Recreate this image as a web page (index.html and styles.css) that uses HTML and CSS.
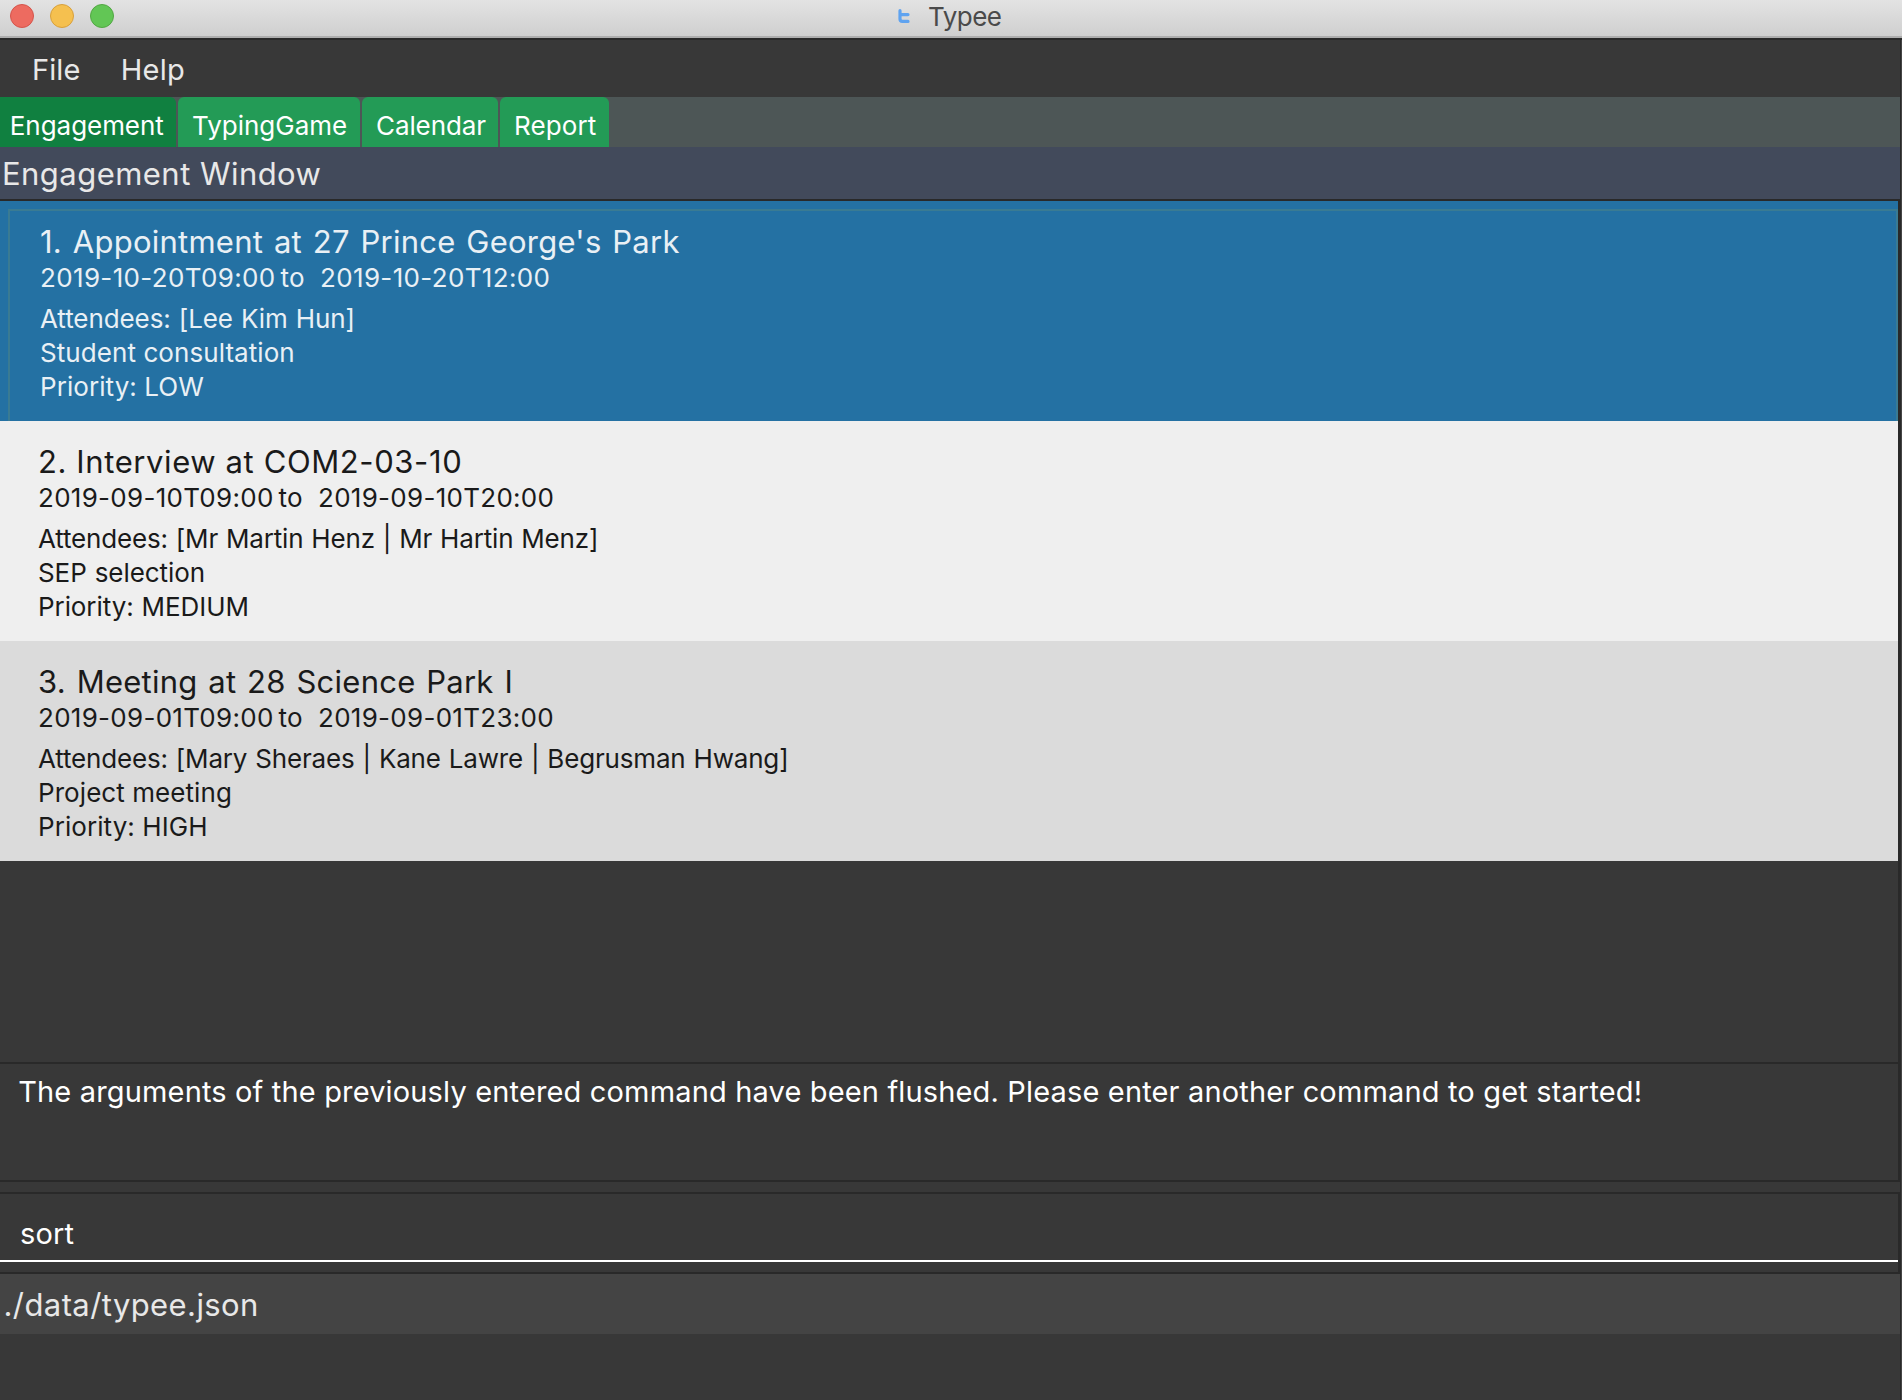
FILE: index.html
```html
<!DOCTYPE html>
<html lang="en">
<head>
<meta charset="utf-8">
<title>Typee</title>
<link rel="stylesheet" href="styles.css">
</head>
<body>
<div class="window">
  <header class="titlebar">
    <div class="lights">
      <span class="light close"></span><span class="light minimise"></span><span class="light zoom"></span>
    </div>
    <div class="caption">
      <svg class="logo" width="12" height="15" viewBox="0 0 12 15" fill="none" stroke="#5fa3f0" stroke-width="3.2" stroke-linecap="round" stroke-linejoin="round"><path d="M2 1.7v8.3q0 2.4 2.4 2.4h5.6M2 5.6h8"/></svg>
      <span>Typee</span>
    </div>
  </header>
  <nav class="menubar"><span class="menu-file">File</span><span class="menu-help">Help</span></nav>
  <div class="tabs">
    <div class="tab engagement active">Engagement</div>
    <div class="tab typing">TypingGame</div>
    <div class="tab calendar">Calendar</div>
    <div class="tab report">Report</div>
  </div>
  <h1 class="heading">Engagement Window</h1>
  <main class="list">
    <article class="item selected">
      <h2>1. Appointment at 27 Prince George's Park</h2>
      <div class="when"><span class="from">2019-10-20T09:00</span><span class="to">to</span><span>2019-10-20T12:00</span></div>
      <p>Attendees: [Lee Kim Hun]</p>
      <p class="spaced">Student consultation</p>
      <p class="spaced">Priority: LOW</p>
    </article>
    <article class="item even">
      <h2>2. Interview at COM2-03-10</h2>
      <div class="when"><span class="from">2019-09-10T09:00</span><span class="to">to</span><span>2019-09-10T20:00</span></div>
      <p class="tight">Attendees: [Mr Martin Henz | Mr Hartin Menz]</p>
      <p>SEP selection</p>
      <p>Priority: MEDIUM</p>
    </article>
    <article class="item odd">
      <h2>3. Meeting at 28 Science Park I</h2>
      <div class="when"><span class="from">2019-09-01T09:00</span><span class="to">to</span><span>2019-09-01T23:00</span></div>
      <p class="tight">Attendees: [Mary Sheraes | Kane Lawre | Begrusman Hwang]</p>
      <p class="spaced">Project meeting</p>
      <p class="spaced">Priority: HIGH</p>
    </article>
  </main>
  <section class="result">The arguments of the previously entered command have been flushed. Please enter another command to get started!</section>
  <section class="command"><div class="field">sort</div></section>
  <footer class="status">./data/typee.json</footer>
</div>
</body>
</html>
```
FILE: styles.css
```css
* { box-sizing: border-box; }
body {
  margin: 0;
  background: #383838;
  font-family: "Inter", "Liberation Sans", sans-serif;
  font-size: 26px;
  white-space: nowrap;
}
h1, h2, p { margin: 0; font-weight: 400; }

.window {
  display: flex;
  flex-direction: column;
  height: 1400px;
  overflow: hidden;
  background: linear-gradient(90deg, #383838 1900px, #292929 1900px, #292929 1901px, #454545 1901px);
}

.titlebar {
  position: relative;
  height: 40px;
  display: flex;
  border-bottom: 2px solid #292929;
  background: linear-gradient(#e3e3e3, #cfcfcf 36px, #adadad 36px, #adadad 38px);
  color: #4a4a4a;
}
.lights { display: flex; gap: 16px; padding: 4px 0 0 10px; }
.light { width: 24px; height: 24px; border-radius: 50%; border: 1px solid; }
.close { background: #ed6b60; border-color: #d5544b; }
.minimise { background: #f5c04f; border-color: #d8a03c; }
.zoom { background: #62c655; border-color: #52a743; }
.caption { display: flex; margin-left: 784px; line-height: 33px; letter-spacing: -0.5px; }
.logo { margin: 9px 18px 0 0; }

.menubar {
  height: 57px;
  display: flex;
  padding: 2px 0 0 32px;
  font-size: 29px;
  line-height: 55px;
  color: #e8e8e8;
}
.menu-file { width: 88.7px; letter-spacing: 0.1px; }
.menu-help { letter-spacing: 0.3px; }

.tabs {
  width: 1900px;
  height: 50px;
  display: flex;
  gap: 2px;
  background: #4d5656;
}
.tab {
  height: 50px;
  padding: 7px 0 0 14px;
  border-radius: 6px 6px 0 0;
  background: #239b56;
  color: #fff;
  line-height: 43px;
}
.tab.active { background: #108040; border-top-left-radius: 0; }
.engagement { width: 176px; padding-left: 9.8px; letter-spacing: -0.05px; }
.typing { width: 182px; }
.calendar { width: 136px; letter-spacing: -0.1px; }
.report { width: 109px; padding-left: 14px; letter-spacing: 0.1px; }

.heading {
  width: 1900px;
  height: 52px;
  padding: 1px 0 0 2px;
  background: #424a5b;
  color: #e8e8e8;
  font-size: 31px;
  line-height: 51px;
  letter-spacing: 0.46px;
}

.list {
  width: 1900px;
  height: 863px;
  border: solid #292929;
  border-width: 2px 2px 0 0;
}
.item {
  position: relative;
  height: 220px;
  padding: 22px 0 0 38px;
  color: #1a1a1a;
}
.item.selected { padding-left: 40px; background: #2471a3; color: #e9f0f5; }
.item.selected::before {
  content: "";
  position: absolute;
  inset: 8px 0 0 8px;
  border: solid #3a7b93;
  border-width: 2px 2px 0 2px;
}
.item.even { background: #efefef; }
.item.odd { background: #dbdbdb; }
.item h2 { font-size: 31px; line-height: 37px; letter-spacing: 0.25px; word-spacing: 1.8px; }
.item.even h2 { letter-spacing: 0.6px; word-spacing: 0; }
.item p { line-height: 34px; letter-spacing: -0.08px; word-spacing: 0.8px; }
.item p.spaced { letter-spacing: 0.07px; word-spacing: 0; }
.item p.tight { letter-spacing: -0.17px; }
.when { display: flex; margin-bottom: 7px; line-height: 35px; letter-spacing: 0.35px; }
.item.even .when, .item.odd .when { letter-spacing: 0.28px; }
.from { width: 240.5px; }
.to { width: 39.5px; }

.result {
  width: 1900px;
  height: 120px;
  padding: 10px 0 0 18.2px;
  border: solid #292929;
  border-width: 2px 2px 2px 0;
  color: #fff;
  font-size: 29px;
  line-height: 35px;
  letter-spacing: 0.156px;
}

.command {
  width: 1900px;
  height: 82px;
  margin-top: 10px;
  border: solid #292929;
  border-width: 2px 2px 2px 0;
}
.field {
  height: 68px;
  padding: 22px 0 0 20px;
  border-bottom: 2px solid #fff;
  color: #fff;
  font-size: 29px;
  line-height: 35px;
  letter-spacing: 0.14px;
}

.status {
  width: 1900px;
  height: 60px;
  padding: 5px 0 0 3.5px;
  background: #444;
  color: #e8e8e8;
  font-size: 31px;
  line-height: 51px;
  letter-spacing: 0.41px;
}
```
